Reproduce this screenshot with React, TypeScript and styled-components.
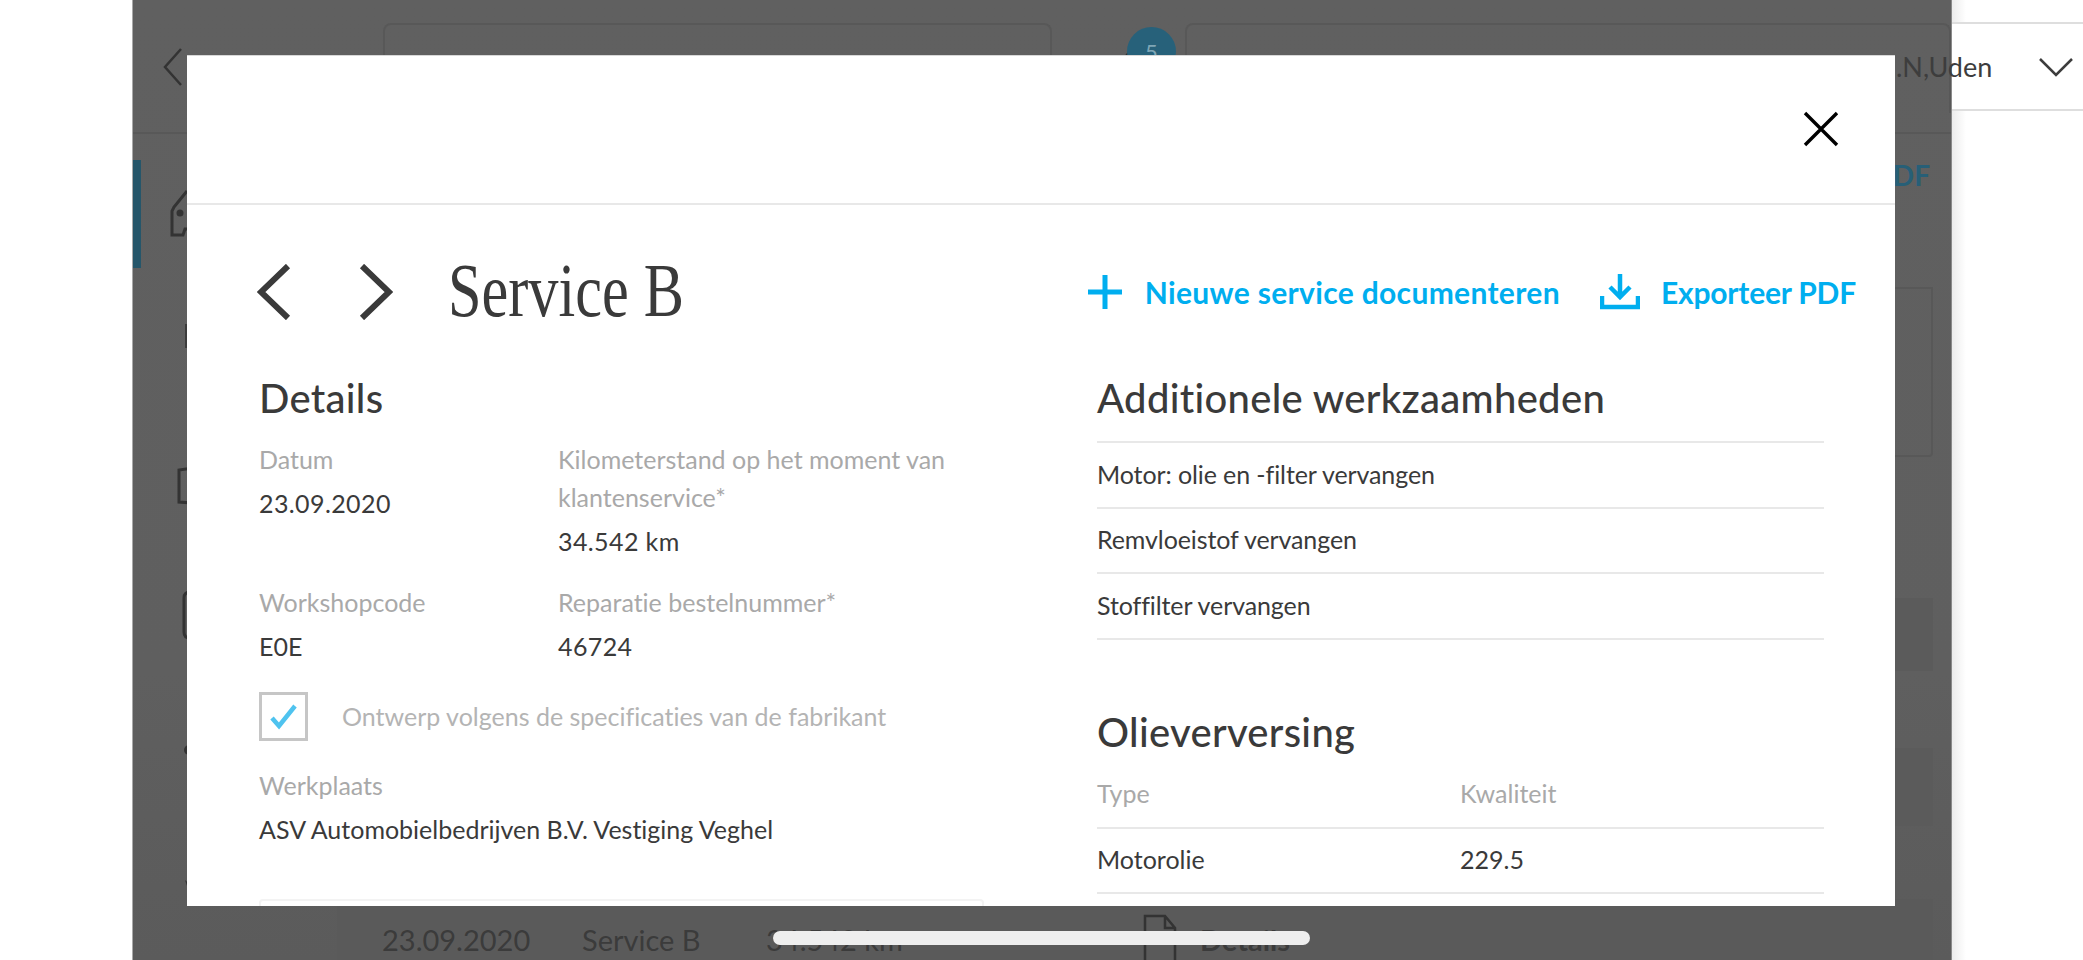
import React from 'react';
import styled, { createGlobalStyle } from 'styled-components';

const GlobalStyle = createGlobalStyle`
  html, body { margin: 0; padding: 0; background: #fff; }
  * { box-sizing: border-box; }
  body {
    font-family: "Lato", "Liberation Sans", sans-serif;
    font-variant-ligatures: none;
    color: #3a3a3a;
  }
`;

const Page = styled.div`
  position: relative;
  display: flex;
  width: 2083px;
  height: 960px;
  overflow: hidden;
  background: #fff;
`;

const Gutter = styled.div`
  flex: 0 0 132px;
`;

const AppPanel = styled.div`
  flex: 0 0 1819px;
  display: flex;
  flex-direction: column;
  background: linear-gradient(#606060, #5f5f5f 70%, #5b5b5b);
  border-left: 1px solid #a9a9a9;
  border-right: 1px solid #8a8a8a;
`;

const TopBar = styled.div`
  display: flex;
  flex: 0 0 134px;
  padding-top: 23px;
  border-bottom: 2px solid #585858;
`;

const BackButton = styled.div`
  flex: 0 0 250px;
  padding: 25px 0 0 30px;
  color: #333;
`;

const SearchBox = styled.div<{ $width: number }>`
  width: ${p => p.$width}px;
  height: 90px;
  border: 2px solid #585858;
  border-bottom: none;
  border-radius: 8px 8px 0 0;
`;

const Bell = styled.div`
  position: relative;
  flex: 0 0 133px;
`;

const BellArc = styled.svg`
  position: absolute;
  left: 70px;
  top: 22px;
`;

const Badge = styled.div`
  position: absolute;
  left: 75px;
  top: 4px;
  width: 49px;
  height: 49px;
  border-radius: 50%;
  background: #27617a;
  color: #7fa6b6;
  font-size: 22px;
  line-height: 49px;
  text-align: center;
`;

const Body = styled.div`
  display: flex;
  flex: 1;
  min-height: 0;
`;

const Sidebar = styled.div`
  flex: 0 0 204px;
  padding-top: 26px;
`;

const NavItem = styled.div<{ $height: number; $active?: boolean; $left: number }>`
  display: flex;
  align-items: center;
  height: ${p => p.$height}px;
  padding-left: ${p => p.$left}px;
  border-left: 8px solid ${p => (p.$active ? '#25566a' : 'transparent')};
`;

const Main = styled.div`
  flex: 1;
  display: flex;
  flex-direction: column;
  padding-right: 18px;
`;

const PdfLink = styled.div`
  flex: 0 0 81px;
  padding: 24px 3px 0 0;
  text-align: right;
  font-size: 28px;
  font-weight: 700;
  line-height: 34px;
  color: #275f77;
`;

const OverviewCard = styled.div`
  height: 170px;
  margin-top: 72px;
  border: 2px solid #585858;
  border-radius: 0 0 4px 4px;
`;

const ShadedRow = styled.div<{ $top: number; $height: number }>`
  flex: 0 0 ${p => p.$height}px;
  margin-top: ${p => p.$top}px;
  background: #5b5b5b;
`;

const HistoryRow = styled.div`
  display: flex;
  align-items: center;
  flex: 0 0 61px;
  margin-top: 73px;
  padding-left: 45px;
  background: #5a5a5a;
  color: #3b3b3b;
  font-size: 29px;
`;

const HistoryCell = styled.span<{ $width: number; $bold?: boolean }>`
  flex: 0 0 ${p => p.$width}px;
  font-weight: ${p => (p.$bold ? 700 : 400)};
  padding-top: 20px;
  white-space: nowrap;
`;

const DocIcon = styled.svg`
  align-self: flex-end;
  flex: 0 0 57px;
`;

const RightRail = styled.div`
  position: relative;
  flex: 1;
  background: linear-gradient(90deg, #ececec, #fff 14px);
`;

const UserSelect = styled.div`
  display: flex;
  align-items: center;
  justify-content: space-between;
  height: 89px;
  margin-top: 22px;
  padding: 0 10px 0 0;
  background: #fff;
  border-top: 2px solid #dedede;
  border-bottom: 2px solid #dedede;
`;

const UserName = styled.span`
  margin-left: -56px;
  font-size: 27px;
  color: #3d3d3d;
  white-space: nowrap;
`;

const Modal = styled.div`
  position: absolute;
  left: 187px;
  top: 55px;
  width: 1708px;
  height: 851px;
  overflow: hidden;
  background: #fff;
  border-top: 1px solid #d8d8d8;
`;

const ModalHeader = styled.div`
  display: flex;
  align-items: center;
  justify-content: flex-end;
  height: 149px;
  padding: 0 56px 2px 0;
  border-bottom: 2px solid #e8e8e8;
`;

const TitleRow = styled.div`
  display: flex;
  align-items: center;
  height: 173px;
  padding: 0 39px 0 70px;
`;

const Pager = styled.div`
  display: flex;
  gap: 68px;
  margin-right: 55px;
`;

const Title = styled.h1`
  flex: 1;
  margin: -4px 0 0;
  font-family: "Liberation Serif", serif;
  font-size: 76px;
  font-weight: 400;
  line-height: 80px;
  color: #3a3a3a;
  white-space: nowrap;
  transform: scaleX(0.793);
  transform-origin: left center;
`;

const ActionLink = styled.div<{ $gap: number; $left: number; $spacing: number }>`
  display: flex;
  align-items: center;
  gap: ${p => p.$gap}px;
  margin-left: ${p => p.$left}px;
  font-size: 30px;
  font-weight: 700;
  letter-spacing: ${p => p.$spacing}px;
  color: #00aeef;
  white-space: nowrap;
`;

const Columns = styled.div`
  display: grid;
  grid-template-columns: 725px 727px;
  column-gap: 113px;
  padding-left: 72px;
`;

const SectionTitle = styled.h2<{ $top?: number }>`
  margin: ${p => p.$top ?? 0}px 0 0;
  font-size: 40px;
  font-weight: 500;
  letter-spacing: 0.3px;
  line-height: 40px;
  color: #3a3a3a;
  white-space: nowrap;
`;

const FieldGrid = styled.div`
  display: grid;
  grid-template-columns: 299px 426px;
  row-gap: 20px;
  margin-top: 22px;
`;

const Field = styled.div<{ $top?: number }>`
  margin-top: ${p => p.$top ?? 0}px;
`;

const FieldLabel = styled.div`
  font-size: 25px;
  line-height: 38px;
  color: #a9a9a9;
`;

const FieldValue = styled.div<{ $numeric?: boolean }>`
  margin-top: 3px;
  font-size: 25px;
  line-height: 44px;
  letter-spacing: ${p => (p.$numeric ? 0.4 : 0)}px;
  color: #3a3a3a;
  white-space: nowrap;
`;

const CheckRow = styled.div`
  display: flex;
  align-items: center;
  gap: 34px;
  margin-top: 24px;
`;

const CheckBox = styled.div`
  width: 49px;
  height: 49px;
  border: 3px solid #c6c6c6;
`;

const CheckLabel = styled.span`
  margin-top: -2px;
  font-size: 25px;
  color: #b4b4b4;
  white-space: nowrap;
`;

const PeekCard = styled.div`
  height: 40px;
  margin-top: 48px;
  border: 2px solid #f3f3f3;
  border-radius: 4px 4px 0 0;
`;

const PlainList = styled.div`
  margin-top: 23px;
  border-top: 2px solid #e8e8e8;
`;

const PlainRow = styled.div`
  display: flex;
  align-items: center;
  height: 65.67px;
  padding-bottom: 2px;
  font-size: 25px;
  letter-spacing: -0.1px;
  color: #3a3a3a;
  border-bottom: 2px solid #e8e8e8;
`;

const OilHead = styled.div`
  display: grid;
  grid-template-columns: 363px 1fr;
  margin-top: 22px;
  padding-bottom: 15px;
  border-bottom: 2px solid #e8e8e8;
`;

const OilRow = styled.div`
  display: grid;
  grid-template-columns: 363px 1fr;
  align-items: center;
  height: 65px;
  padding-bottom: 2px;
  font-size: 25px;
  color: #3a3a3a;
  border-bottom: 2px solid #e8e8e8;
`;

const HomeIndicator = styled.div`
  position: absolute;
  left: 773px;
  top: 931px;
  width: 537px;
  height: 14px;
  border-radius: 7px;
  background: #eeeeee;
`;

const Chevron = ({ flip }: { flip?: boolean }) => (
  <svg width="34" height="56" viewBox="0 0 34 56" fill="none" stroke="#3a3a3a" strokeWidth="6">
    <path d={flip ? 'M3 2 L30 28 L3 54' : 'M31 2 L4 28 L31 54'} />
  </svg>
);

export default function App() {
  return (
    <Page>
      <GlobalStyle />
      <Gutter />
      <AppPanel>
        <TopBar>
          <BackButton>
            <svg width="20" height="38" viewBox="0 0 20 38" fill="none" stroke="#333" strokeWidth="2.5">
              <path d="M18 1 L2 19 L18 37" />
            </svg>
          </BackButton>
          <SearchBox $width={669} />
          <Bell>
            <BellArc width="20" height="22" viewBox="0 0 20 22" fill="none" stroke="#333" strokeWidth="3">
              <path d="M2 22 Q2 8 14 4" />
            </BellArc>
            <Badge>5</Badge>
          </Bell>
          <SearchBox $width={766} />
        </TopBar>
        <Body>
          <Sidebar>
            <NavItem $height={108} $active $left={28}>
              <svg width="50" height="50" viewBox="0 0 50 50" fill="none" stroke="#333" strokeWidth="3">
                <path d="M18 2 L5 18 L3 22 V46 H14 L16 40 H40" />
                <circle cx="11" cy="24" r="2" fill="#333" />
              </svg>
            </NavItem>
            <NavItem $height={136} $left={44}>
              <svg width="6" height="24" viewBox="0 0 6 24" fill="#3c3c3c">
                <rect width="4" height="24" />
              </svg>
            </NavItem>
            <NavItem $height={162} $left={36}>
              <svg width="30" height="42" viewBox="0 0 30 42" fill="none" stroke="#333" strokeWidth="3">
                <path d="M30 2 L2 6 V38 L30 40" />
              </svg>
            </NavItem>
            <NavItem $height={98} $left={41}>
              <svg width="20" height="50" viewBox="0 0 20 50" fill="none" stroke="#333" strokeWidth="3">
                <path d="M18 2 H8 Q2 2 2 8 V42 Q2 48 8 48 H18" />
              </svg>
            </NavItem>
            <NavItem $height={172} $left={42}>
              <svg width="10" height="12" viewBox="0 0 10 12" fill="#333">
                <circle cx="6" cy="6" r="5" />
              </svg>
            </NavItem>
            <NavItem $height={98} $left={44}>
              <svg width="8" height="10" viewBox="0 0 8 10" fill="#333">
                <path d="M0 0 L6 5 L3 9 Z" />
              </svg>
            </NavItem>
          </Sidebar>
          <Main>
            <PdfLink>Exporteer PDF</PdfLink>
            <OverviewCard />
            <ShadedRow $top={141} $height={73} />
            <ShadedRow $top={77} $height={78} />
            <HistoryRow>
              <HistoryCell $width={200}>23.09.2020</HistoryCell>
              <HistoryCell $width={184}>Service B</HistoryCell>
              <HistoryCell $width={377}>34.542 km</HistoryCell>
              <DocIcon width="57" height="46" viewBox="0 0 57 46" fill="none" stroke="#333" strokeWidth="2.5">
                <path d="M2 46 V2 H22 L32 14 V46 M22 2 V14 H32" />
              </DocIcon>
              <HistoryCell $width={120} $bold>Details</HistoryCell>
            </HistoryRow>
          </Main>
        </Body>
      </AppPanel>
      <RightRail>
        <UserSelect>
          <UserName>.N,Uden</UserName>
          <svg width="34" height="20" viewBox="0 0 34 20" fill="none" stroke="#3d3d3d" strokeWidth="2.5">
            <path d="M1 2 L17 18 L33 2" />
          </svg>
        </UserSelect>
      </RightRail>

      <Modal>
        <ModalHeader>
          <svg width="36" height="36" viewBox="0 0 36 36" fill="none" stroke="#000" strokeWidth="3.4">
            <path d="M2 2 L34 34 M34 2 L2 34" />
          </svg>
        </ModalHeader>
        <TitleRow>
          <Pager>
            <Chevron />
            <Chevron flip />
          </Pager>
          <Title>Service B</Title>
          <ActionLink $gap={23} $left={0} $spacing={0.33}>
            <svg width="34" height="34" viewBox="0 0 34 34" fill="none" stroke="#00aeef" strokeWidth="5">
              <path d="M17 0 V34 M0 17 H34" />
            </svg>
            Nieuwe service documenteren
          </ActionLink>
          <ActionLink $gap={21} $left={40} $spacing={-0.2}>
            <svg width="40" height="36" viewBox="0 0 40 36" fill="none" stroke="#00aeef" strokeWidth="4.5">
              <path d="M20 0 V22 M10 13 L20 23 L30 13 M2 22 V33 H38 V22" />
            </svg>
            Exporteer PDF
          </ActionLink>
        </TitleRow>
        <Columns>
          <div>
            <SectionTitle>Details</SectionTitle>
            <FieldGrid>
              <Field>
                <FieldLabel>Datum</FieldLabel>
                <FieldValue $numeric>23.09.2020</FieldValue>
              </Field>
              <Field>
                <FieldLabel>Kilometerstand op het moment van klantenservice*</FieldLabel>
                <FieldValue $numeric>34.542 km</FieldValue>
              </Field>
              <Field>
                <FieldLabel>Workshopcode</FieldLabel>
                <FieldValue>E0E</FieldValue>
              </Field>
              <Field>
                <FieldLabel>Reparatie bestelnummer*</FieldLabel>
                <FieldValue $numeric>46724</FieldValue>
              </Field>
            </FieldGrid>
            <CheckRow>
              <CheckBox>
                <svg width="43" height="43" viewBox="0 0 43 43" fill="none" stroke="#4fc3ef" strokeWidth="4.5">
                  <path d="M10 23 L17 31 L33 11" />
                </svg>
              </CheckBox>
              <CheckLabel>Ontwerp volgens de specificaties van de fabrikant</CheckLabel>
            </CheckRow>
            <Field $top={25}>
              <FieldLabel>Werkplaats</FieldLabel>
              <FieldValue>ASV Automobielbedrijven B.V. Vestiging Veghel</FieldValue>
            </Field>
            <PeekCard />
          </div>
          <div>
            <SectionTitle>Additionele werkzaamheden</SectionTitle>
            <PlainList>
              <PlainRow>Motor: olie en -filter vervangen</PlainRow>
              <PlainRow>Remvloeistof vervangen</PlainRow>
              <PlainRow>Stoffilter vervangen</PlainRow>
            </PlainList>
            <SectionTitle $top={72}>Olieverversing</SectionTitle>
            <OilHead>
              <FieldLabel>Type</FieldLabel>
              <FieldLabel>Kwaliteit</FieldLabel>
            </OilHead>
            <OilRow>
              <span>Motorolie</span>
              <span>229.5</span>
            </OilRow>
          </div>
        </Columns>
      </Modal>
      <HomeIndicator />
    </Page>
  );
}
